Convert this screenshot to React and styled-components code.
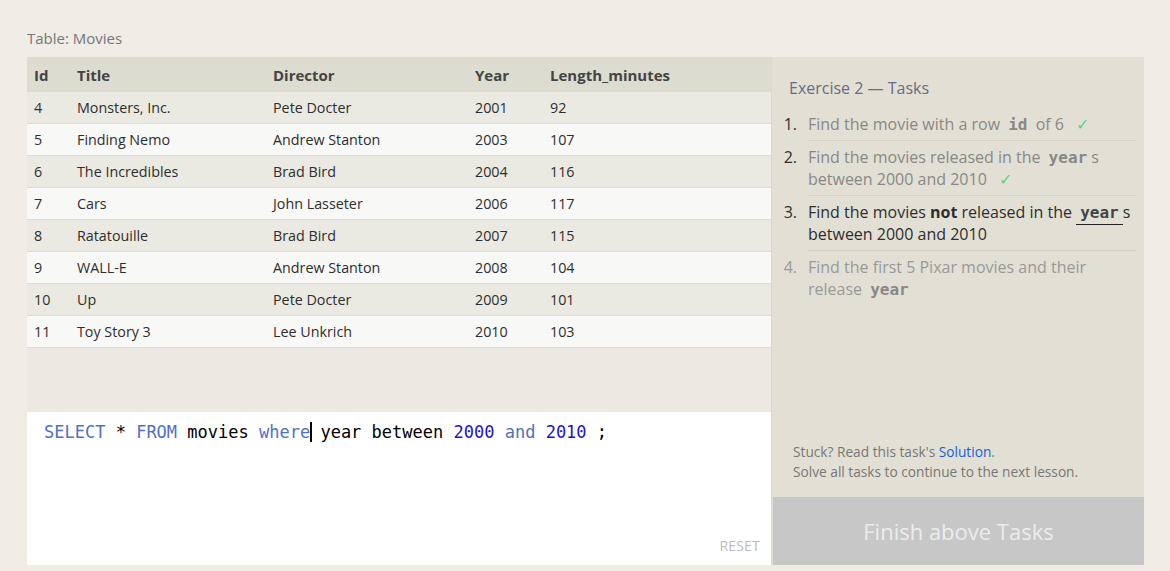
import React from "react";
import styled, { createGlobalStyle } from "styled-components";

const Global = createGlobalStyle`
  html, body { margin: 0; padding: 0; }
  body {
    background: #efede6;
    font-family: "Open Sans", "Liberation Sans", sans-serif;
    color: #333;
  }
`;

const Page = styled.div`
  padding: 26px 26px 6px 27px;
  width: 1170px;
  height: 571px;
  box-sizing: border-box;
`;

const Caption = styled.div`
  font-size: 15px;
  color: #777;
  height: 31px;
  line-height: 24px;
`;

const Main = styled.div`
  display: grid;
  grid-template-columns: 744px 373px;
  height: 508px;
`;

const LeftCol = styled.div`
  display: flex;
  flex-direction: column;
`;

const TableArea = styled.div`
  height: 355px;
  background: #ebe9e1;
`;

const Table = styled.table`
  width: 100%;
  border-collapse: collapse;
  table-layout: fixed;
  font-size: 14.3px;
`;

const Th = styled.th`
  text-align: left;
  font-weight: 700;
  font-size: 15px;
  color: #444;
  height: 35px;
  padding: 0 0 0 7px;
  background: #dcdcd0;
  width: ${(p) => p.$w - 7}px;
`;

const Tr = styled.tr`
  background: ${(p) => (p.$odd ? "#ebeae2" : "#f8f8f6")};
  border-bottom: 1px solid #dedcd4;
`;

const Td = styled.td`
  height: 31px;
  padding: 0 0 0 7px;
  color: #2e2e2e;
`;

const Editor = styled.div`
  flex: 1;
  background: #fff;
  display: flex;
  flex-direction: column;
  padding: 9px 11px 10px 17px;
`;

const Code = styled.div`
  font-family: "DejaVu Sans Mono", monospace;
  font-size: 17px;
  line-height: 22px;
  color: #000;
  white-space: pre;
`;

const Kw = styled.span`
  color: #5170c4;
`;

const Num = styled.span`
  color: #1d14c8;
`;

const Caret = styled.span`
  display: inline-block;
  width: 0;
  height: 20px;
  border-left: 2px solid #000;
  vertical-align: -4px;
  margin-right: -2px;
`;

const Reset = styled.div`
  margin-top: auto;
  align-self: flex-end;
  font-size: 14px;
  color: #bbb;
  letter-spacing: 0.2px;
`;

const Panel = styled.div`
  background: #e2e0d4;
  border-left: 1px solid #dad8cc;
  display: flex;
  flex-direction: column;
`;

const PanelTitle = styled.div`
  font-size: 16px;
  color: #686c84;
  padding: 19px 0 0 17px;
  line-height: 24px;
  height: 43px;
  box-sizing: border-box;
  margin-bottom: 8px;
`;

const TaskList = styled.ol`
  list-style: none;
  margin: 0;
  padding: 0 8px 0 0;
`;

const Task = styled.li`
  display: flex;
  font-size: 16px;
  line-height: 22px;
  color: ${(p) => (p.$state === "done" ? "#888" : p.$state === "current" ? "#2e2e2e" : "#999")};
`;

const TaskNum = styled.span`
  width: 36px;
  flex: none;
  text-align: right;
  padding-right: 11px;
  box-sizing: border-box;
  color: ${(p) => (p.$state === "todo" ? "#999" : "#2e2e2e")};
  padding-top: 5px;
`;

const TaskText = styled.span`
  flex: 1;
  padding: 5px 0 5px;
  border-bottom: 1px solid ${(p) => (p.$last ? "transparent" : "#d5d3c7")};
`;

const Mono = styled.code`
  font-family: "DejaVu Sans Mono", monospace;
  font-weight: 700;
  font-size: 16px;
  line-height: 1;
  padding: 0 4px 2px;
  color: ${(p) => (p.$current ? "#444" : "#888")};
  border-bottom: 1px solid ${(p) => (p.$current ? "#222" : "transparent")};
`;

const Check = styled.span`
  color: #63d18a;
  margin-left: 12px;
  font-size: 16px;
`;

const Help = styled.div`
  margin-top: auto;
  padding: 0 0 15px 21px;
  font-size: 13.7px;
  line-height: 20px;
  color: #777;
`;

const Link = styled.a`
  color: #1a5fd6;
  text-decoration: none;
`;

const FinishButton = styled.div`
  height: 68px;
  background: #c7c7c7;
  color: #ececec;
  font-size: 22px;
  display: flex;
  align-items: center;
  justify-content: center;
  margin-left: 1px;
`;

const movies = [
  [4, "Monsters, Inc.", "Pete Docter", 2001, 92],
  [5, "Finding Nemo", "Andrew Stanton", 2003, 107],
  [6, "The Incredibles", "Brad Bird", 2004, 116],
  [7, "Cars", "John Lasseter", 2006, 117],
  [8, "Ratatouille", "Brad Bird", 2007, 115],
  [9, "WALL-E", "Andrew Stanton", 2008, 104],
  [10, "Up", "Pete Docter", 2009, 101],
  [11, "Toy Story 3", "Lee Unkrich", 2010, 103],
];

const cols = [
  ["Id", 43],
  ["Title", 196],
  ["Director", 202],
  ["Year", 75],
  ["Length_minutes", 228],
];

export default function App() {
  return (
    <>
      <Global />
      <Page>
        <Caption>Table: Movies</Caption>
        <Main>
          <LeftCol>
            <TableArea>
              <Table>
                <thead>
                  <tr>
                    {cols.map(([c, w]) => (
                      <Th key={c} $w={w}>{c}</Th>
                    ))}
                  </tr>
                </thead>
                <tbody>
                  {movies.map((m, i) => (
                    <Tr key={m[0]} $odd={i % 2 === 0}>
                      {m.map((v, j) => (
                        <Td key={j}>{v}</Td>
                      ))}
                    </Tr>
                  ))}
                </tbody>
              </Table>
            </TableArea>
            <Editor>
              <Code>
                <Kw>SELECT</Kw> * <Kw>FROM</Kw> movies <Kw>where</Kw><Caret /> year between <Num>2000</Num> <Kw>and</Kw> <Num>2010</Num> ;
              </Code>
              <Reset>RESET</Reset>
            </Editor>
          </LeftCol>
          <Panel>
            <PanelTitle>Exercise 2 — Tasks</PanelTitle>
            <TaskList>
              <Task $state="done">
                <TaskNum $state="done">1.</TaskNum>
                <TaskText>
                  Find the movie with a row <Mono>id</Mono> of 6<Check>✓</Check>
                </TaskText>
              </Task>
              <Task $state="done">
                <TaskNum $state="done">2.</TaskNum>
                <TaskText>
                  Find the movies released in the <Mono>year</Mono>s between 2000 and 2010<Check>✓</Check>
                </TaskText>
              </Task>
              <Task $state="current">
                <TaskNum $state="current">3.</TaskNum>
                <TaskText>
                  Find the movies <b>not</b> released in the <Mono $current>year</Mono>s between 2000 and 2010
                </TaskText>
              </Task>
              <Task $state="todo">
                <TaskNum $state="todo">4.</TaskNum>
                <TaskText $last>
                  Find the first 5 Pixar movies and their release <Mono>year</Mono>
                </TaskText>
              </Task>
            </TaskList>
            <Help>
              Stuck? Read this task's <Link href="#">Solution</Link>.
              <br />
              Solve all tasks to continue to the next lesson.
            </Help>
            <FinishButton>Finish above Tasks</FinishButton>
          </Panel>
        </Main>
      </Page>
    </>
  );
}
